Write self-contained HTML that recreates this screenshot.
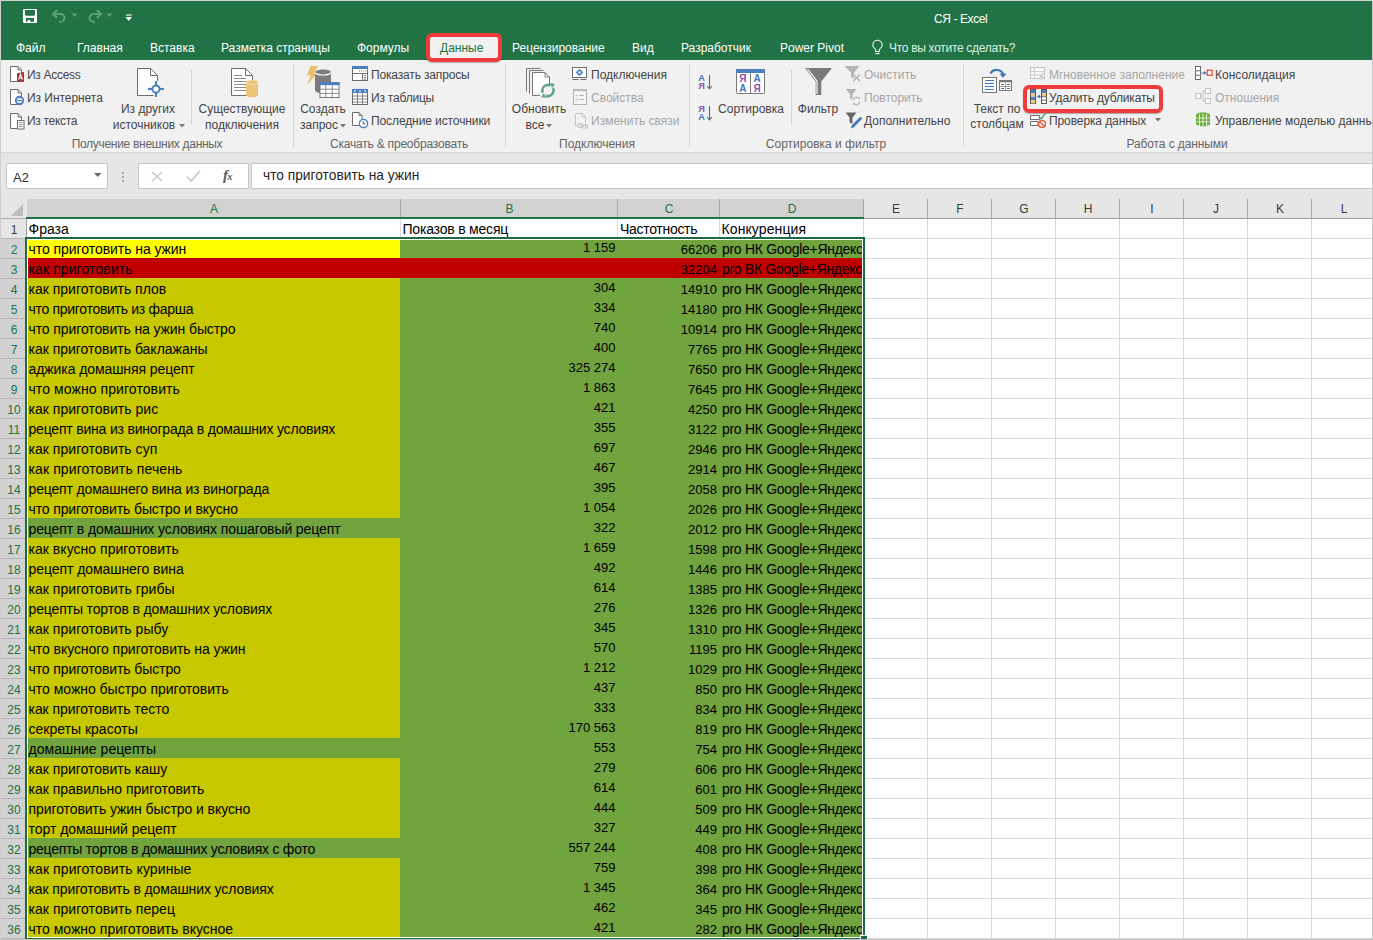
<!DOCTYPE html>
<html><head><meta charset="utf-8"><title>Excel</title>
<style>
html,body{margin:0;padding:0;}
body{width:1373px;height:940px;overflow:hidden;position:relative;font-family:"Liberation Sans", sans-serif;background:#fff;}
body>div,body>svg{position:absolute;}
div{position:absolute;}
.t{white-space:nowrap;font-family:"Liberation Sans", sans-serif;}
</style></head><body>
<div style="left:0px;top:0px;width:1373px;height:940px;background:#d3cfd0;"></div><div style="left:1px;top:1px;width:1371px;height:59px;background:#217346;"></div><svg style="position:absolute;left:23px;top:9px;" width="14" height="14" viewBox="0 0 14 14"><path d="M0 1.2Q0 0 1.2 0H12.8Q14 0 14 1.2V12.8Q14 14 12.8 14H1.2Q0 14 0 12.8Z" fill="#fff"/><path d="M2 1H12V5.6Q12 6.7 10.9 6.7H3.1Q2 6.7 2 5.6Z" fill="#217346"/><path d="M3 9H11V12.8H7.2V11H4.7V12.8H3Z" fill="#217346"/></svg><svg style="position:absolute;left:51px;top:8px;" width="17" height="16" viewBox="0 0 17 16"><path d="M3 6h6.5a3.9 3.9 0 0 1 0 7.8H8" fill="none" stroke="#5f9d7a" stroke-width="2"/><path d="M6.2 2L2 6l4.2 4" fill="none" stroke="#5f9d7a" stroke-width="2"/></svg><svg style="position:absolute;left:71px;top:13px;" width="8" height="5" viewBox="0 0 8 5"><path d="M0.5 0.5h6l-3 3.5z" fill="#5f9d7a"/></svg><svg style="position:absolute;left:86px;top:8px;" width="17" height="16" viewBox="0 0 17 16"><path d="M14 6h-6.5a3.9 3.9 0 0 0 0 7.8H9" fill="none" stroke="#5f9d7a" stroke-width="2"/><path d="M10.8 2L15 6l-4.2 4" fill="none" stroke="#5f9d7a" stroke-width="2"/></svg><svg style="position:absolute;left:106px;top:13px;" width="8" height="5" viewBox="0 0 8 5"><path d="M0.5 0.5h6l-3 3.5z" fill="#5f9d7a"/></svg><svg style="position:absolute;left:125px;top:14px;" width="8" height="8" viewBox="0 0 8 8"><rect x="1" y="0.5" width="5.5" height="1.1" fill="#fff"/><path d="M0.5 3h6.5l-3.25 4z" fill="#fff"/></svg><div class="t" style="top:12.84px;font-size:12px;line-height:12px;color:#ffffff;left:934px;letter-spacing:-0.4px;">СЯ - Excel</div><div class="t" style="top:41.84px;font-size:12px;line-height:12px;color:#ffffff;left:16px;">Файл</div><div class="t" style="top:41.84px;font-size:12px;line-height:12px;color:#ffffff;left:77px;">Главная</div><div class="t" style="top:41.84px;font-size:12px;line-height:12px;color:#ffffff;left:150px;">Вставка</div><div class="t" style="top:41.84px;font-size:12px;line-height:12px;color:#ffffff;left:221px;">Разметка страницы</div><div class="t" style="top:41.84px;font-size:12px;line-height:12px;color:#ffffff;left:357px;">Формулы</div><div class="t" style="top:41.84px;font-size:12px;line-height:12px;color:#ffffff;left:512px;">Рецензирование</div><div class="t" style="top:41.84px;font-size:12px;line-height:12px;color:#ffffff;left:632px;">Вид</div><div class="t" style="top:41.84px;font-size:12px;line-height:12px;color:#ffffff;left:681px;">Разработчик</div><div class="t" style="top:41.84px;font-size:12px;line-height:12px;color:#ffffff;left:780px;">Power Pivot</div><svg style="position:absolute;left:871px;top:39px;" width="13" height="16" viewBox="0 0 13 16"><path d="M6.5 1.2a4.6 4.6 0 0 0-2.6 8.4c.5.4.8 1 .8 1.6v1.3h3.6v-1.3c0-.6.3-1.2.8-1.6a4.6 4.6 0 0 0-2.6-8.4z" fill="none" stroke="#e8f3ea" stroke-width="1.1"/><path d="M4.5 14.6h4" stroke="#e8f3ea" stroke-width="1.2"/></svg><div class="t" style="top:41.84px;font-size:12px;line-height:12px;color:#dcefe1;left:889px;letter-spacing:-0.3px;">Что вы хотите сделать?</div><div style="left:1px;top:60px;width:1371px;height:92px;background:#f1f1f1;"></div><div style="left:1px;top:152px;width:1371px;height:1px;background:#d6d6d6;"></div><div style="left:1px;top:153px;width:1371px;height:46px;background:#e6e6e6;"></div><div style="left:426px;top:33px;width:76px;height:29px;background:#f1f1f1;border:4px solid #ef3b3b;border-radius:6px;box-sizing:border-box;box-shadow:0 1px 1px rgba(0,0,0,.25);"></div><div class="t" style="top:41.84px;font-size:12px;line-height:12px;color:#217346;left:440px;">Данные</div><div style="left:293px;top:64px;width:1px;height:83px;background:#d4d4d4;"></div><div style="left:505px;top:64px;width:1px;height:83px;background:#d4d4d4;"></div><div style="left:689px;top:64px;width:1px;height:83px;background:#d4d4d4;"></div><div style="left:963px;top:64px;width:1px;height:83px;background:#d4d4d4;"></div><div style="left:191px;top:70px;width:1px;height:54px;background:#d4d4d4;"></div><div style="left:791px;top:70px;width:1px;height:54px;background:#d4d4d4;"></div><div class="t" style="top:137.84px;font-size:12px;line-height:12px;color:#666666;left:-153px;width:600px;text-align:center;letter-spacing:-0.3px;">Получение внешних данных</div><div class="t" style="top:137.84px;font-size:12px;line-height:12px;color:#666666;left:99px;width:600px;text-align:center;letter-spacing:-0.2px;">Скачать &amp; преобразовать</div><div class="t" style="top:137.84px;font-size:12px;line-height:12px;color:#666666;left:297px;width:600px;text-align:center;">Подключения</div><div class="t" style="top:137.84px;font-size:12px;line-height:12px;color:#666666;left:526px;width:600px;text-align:center;">Сортировка и фильтр</div><div class="t" style="top:137.84px;font-size:12px;line-height:12px;color:#666666;left:877px;width:600px;text-align:center;letter-spacing:-0.1px;">Работа с данными</div><svg style="position:absolute;left:9px;top:65px;" width="17" height="18" viewBox="0 0 17 18"><path d="M1.5 1.5H9L12.5 5V16.5H1.5Z" fill="#fff" stroke="#6d6d6d"/><path d="M9 1.5V5H12.5" fill="none" stroke="#6d6d6d"/><path d="M8 8.2L15 7V17L8 16.2Z" fill="#a4373a"/><path d="M9.6 14.6L11.5 9.2L13.4 14.6M10.3 13H12.7" fill="none" stroke="#fff" stroke-width="1.1"/></svg><div class="t" style="top:68.84px;font-size:12px;line-height:12px;color:#444444;left:27px;letter-spacing:-0.3px;">Из Access</div><svg style="position:absolute;left:9px;top:88px;" width="17" height="18" viewBox="0 0 17 18"><path d="M1.5 1.5H9L12.5 5V16.5H1.5Z" fill="#fff" stroke="#6d6d6d"/><path d="M9 1.5V5H12.5" fill="none" stroke="#6d6d6d"/><circle cx="10.5" cy="12.5" r="3.7" fill="#fff" stroke="#4a80c0" stroke-width="1.9"/><path d="M8 12.5H13" stroke="#4a80c0" stroke-width="1.2"/><path d="M9.4 10.6L10.5 9.4L11.6 10.6ZM9.4 14.4L10.5 15.6L11.6 14.4Z" fill="#4a80c0"/></svg><div class="t" style="top:91.84px;font-size:12px;line-height:12px;color:#444444;left:27px;letter-spacing:-0.05px;">Из Интернета</div><svg style="position:absolute;left:9px;top:112px;" width="17" height="18" viewBox="0 0 17 18"><path d="M1.5 1.5H9L12.5 5V16.5H1.5Z" fill="#fff" stroke="#6d6d6d"/><path d="M9 1.5V5H12.5" fill="none" stroke="#6d6d6d"/><rect x="8.5" y="8.5" width="6.5" height="8.5" fill="#fff" stroke="#6d6d6d"/><path d="M10 10.7H13.5M10 12.7H13.5M10 14.7H13.5" stroke="#7a7a7a" stroke-width="0.9"/></svg><div class="t" style="top:114.84px;font-size:12px;line-height:12px;color:#444444;left:27px;letter-spacing:-0.3px;">Из текста</div><svg style="position:absolute;left:135px;top:67px;" width="32" height="32" viewBox="0 0 32 32"><path d="M2.5 1.5H15.5L22.5 8.5V28.5H2.5Z" fill="#fff" stroke="#6d6d6d"/><path d="M15.5 1.5V8.5H22.5" fill="none" stroke="#6d6d6d"/><path d="M13 22H29M21 14V30" stroke="#f1f1f1" stroke-width="5"/><circle cx="21" cy="22" r="3.6" fill="#fff" stroke="#4a80c0" stroke-width="2"/><path d="M13 22H17.4M24.6 22H29M21 14V18.4M21 25.6V30" stroke="#4a80c0" stroke-width="2"/></svg><div class="t" style="top:102.84px;font-size:12px;line-height:12px;color:#444444;left:-152px;width:600px;text-align:center;">Из других</div><div class="t" style="top:118.84px;font-size:12px;line-height:12px;color:#444444;left:-156px;width:600px;text-align:center;">источников</div><svg style="position:absolute;left:179px;top:124px;" width="6" height="4" viewBox="0 0 6 4"><path d="M0 0h6l-3 3.5z" fill="#777"/></svg><svg style="position:absolute;left:229px;top:67px;" width="32" height="32" viewBox="0 0 32 32"><path d="M2.5 1.5H16.5L23.5 8.5V28.5H2.5Z" fill="#fff" stroke="#6d6d6d"/><path d="M16.5 1.5V8.5H23.5" fill="none" stroke="#6d6d6d"/><path d="M5 8.5H13M5 11.5H17M5 14.5H17M5 17.5H17M5 20.5H17M5 23.5H17" stroke="#8a8a8a" stroke-width="1"/><path d="M17 15.5A6 2.3 0 0 1 29 15.5V28A6 2.3 0 0 1 17 28Z" fill="#ecc677"/><path d="M17 15.5A6 2.3 0 0 0 29 15.5" fill="none" stroke="#f7e2b6" stroke-width="0.9"/></svg><div class="t" style="top:102.84px;font-size:12px;line-height:12px;color:#444444;left:-58px;width:600px;text-align:center;">Существующие</div><div class="t" style="top:118.84px;font-size:12px;line-height:12px;color:#444444;left:-58px;width:600px;text-align:center;">подключения</div><svg style="position:absolute;left:305px;top:65px;" width="35" height="34" viewBox="0 0 35 34"><path d="M5.5 1H13L9.2 8H12.5L2 20L5.8 10.5H2Z" fill="#ebbf6b"/><path d="M10 7.2A8 2.8 0 0 1 26 7.2V25.5A8 2.8 0 0 1 10 25.5Z" fill="#7b7b7b"/><path d="M10 7.2A8 2.8 0 0 0 26 7.2" fill="none" stroke="#f1f1f1" stroke-width="1.2"/><path d="M9.5 7.5A8.5 3 0 0 1 26.5 7.5" fill="none" stroke="#f1f1f1" stroke-width="0.01"/><rect x="15" y="17.5" width="19" height="15" fill="#fff" stroke="#7b7b7b"/><rect x="14.5" y="17" width="20" height="3.2" fill="#4a80c0"/><path d="M15 24.2H34M15 28.4H34M20.8 20.2V32.5M27.2 20.2V32.5" stroke="#8a8a8a" stroke-width="1"/><path d="M14.5 32.5H34.5" stroke="#7b7b7b"/></svg><div class="t" style="top:102.84px;font-size:12px;line-height:12px;color:#444444;left:23px;width:600px;text-align:center;">Создать</div><div class="t" style="top:118.84px;font-size:12px;line-height:12px;color:#444444;left:19px;width:600px;text-align:center;">запрос</div><svg style="position:absolute;left:340px;top:124px;" width="6" height="4" viewBox="0 0 6 4"><path d="M0 0h6l-3 3.5z" fill="#777"/></svg><svg style="position:absolute;left:352px;top:66px;" width="17" height="15" viewBox="0 0 17 15"><rect x="0.5" y="0.5" width="15" height="14" fill="#fff" stroke="#6d6d6d"/><rect x="0" y="0" width="16" height="3" fill="#4a80c0"/><path d="M0.5 7.5H15.5M10.5 7.5V14.5" stroke="#6d6d6d"/><path d="M7 5H8M9 5H10M11 5H12M13 5H14M12 9.5H14M12 11.5H14M12 13.2H14" stroke="#777" stroke-width="0.9"/></svg><div class="t" style="top:68.84px;font-size:12px;line-height:12px;color:#444444;left:371px;letter-spacing:-0.15px;">Показать запросы</div><svg style="position:absolute;left:352px;top:89px;" width="17" height="16" viewBox="0 0 17 16"><rect x="0.5" y="0.5" width="15" height="15" fill="#fff" stroke="#6d6d6d"/><rect x="0" y="0" width="16" height="4" fill="#4a80c0"/><path d="M0.5 7H15.5M0.5 10H15.5M0.5 13H15.5M5.5 4V15.5M10.5 4V15.5" stroke="#7a7a7a" stroke-width="0.9"/><path d="M2 2H4M7 2H9M12 2H14" stroke="#fff" stroke-width="1"/></svg><div class="t" style="top:91.84px;font-size:12px;line-height:12px;color:#444444;left:371px;letter-spacing:-0.2px;">Из таблицы</div><svg style="position:absolute;left:352px;top:112px;" width="18" height="17" viewBox="0 0 18 17"><path d="M0.5 0.5H7L10 3.5V13.5H0.5Z" fill="#fff" stroke="#6d6d6d"/><path d="M7 0.5V3.5H10" fill="none" stroke="#6d6d6d"/><circle cx="11.5" cy="11.5" r="4.2" fill="#fff" stroke="#4a80c0" stroke-width="1.2"/><path d="M11.2 9V11.8H13.6" fill="none" stroke="#555" stroke-width="0.9"/></svg><div class="t" style="top:114.84px;font-size:12px;line-height:12px;color:#444444;left:371px;letter-spacing:-0.1px;">Последние источники</div><svg style="position:absolute;left:524px;top:66px;" width="34" height="34" viewBox="0 0 34 34"><path d="M2.5 25.5V2.5H16.5" fill="none" stroke="#777"/><path d="M5.5 27.5V4.5H19.5" fill="none" stroke="#777"/><path d="M8.5 29.5V6.5H21L25.5 11V20" fill="#fff" stroke="#777"/><path d="M8.5 29.5H16" stroke="#777"/><path d="M21 6.5V11H25.5" fill="none" stroke="#777"/><circle cx="24" cy="24.5" r="5.6" fill="none" stroke="#62a48a" stroke-width="2.6" stroke-dasharray="13 4.6" transform="rotate(-25 24 24.5)"/><path d="M26 17L31 18L28 22Z" fill="#62a48a"/><path d="M22 32L17 31L20 27Z" fill="#62a48a"/></svg><div class="t" style="top:102.84px;font-size:12px;line-height:12px;color:#444444;left:239px;width:600px;text-align:center;">Обновить</div><div class="t" style="top:118.84px;font-size:12px;line-height:12px;color:#444444;left:235px;width:600px;text-align:center;">все</div><svg style="position:absolute;left:546px;top:124px;" width="6" height="4" viewBox="0 0 6 4"><path d="M0 0h6l-3 3.5z" fill="#777"/></svg><svg style="position:absolute;left:571px;top:66px;" width="17" height="16" viewBox="0 0 17 16"><rect x="1.5" y="1.5" width="14" height="10" fill="#fff" stroke="#6d6d6d"/><path d="M1.5 13.5H7.5M9.5 13.5H15.5" stroke="#6d6d6d"/><circle cx="8.5" cy="6.5" r="2" fill="#fff" stroke="#3f7fc4" stroke-width="1.4"/><path d="M8.5 3.2V4.2M8.5 8.8V9.8M5.2 6.5H6.2M10.8 6.5H11.8" stroke="#3f7fc4" stroke-width="1.3"/></svg><div class="t" style="top:68.84px;font-size:12px;line-height:12px;color:#444444;left:591px;">Подключения</div><svg style="position:absolute;left:572px;top:89px;" width="16" height="16" viewBox="0 0 16 16"><rect x="1.5" y="0.5" width="13" height="15" fill="#f6f6f8" stroke="#b0b0b0"/><rect x="1" y="0" width="14" height="2.2" fill="#b8b8b8"/><path d="M7 6.5H12M7 10.5H12" stroke="#b4b4b4"/><circle cx="4.5" cy="6.5" r="1.1" fill="#c4c4c4"/><circle cx="4.5" cy="10.5" r="1" fill="none" stroke="#c4c4c4" stroke-width="0.8"/></svg><div class="t" style="top:91.84px;font-size:12px;line-height:12px;color:#a6a6a6;left:591px;">Свойства</div><svg style="position:absolute;left:574px;top:112px;" width="15" height="17" viewBox="0 0 15 17"><path d="M1.5 1.5H8L11.5 5V14" fill="#f7f5f8" stroke="#c4c4c4"/><path d="M1.5 1.5V14" stroke="#c4c4c4"/><path d="M8 1.5V5H11.5" fill="none" stroke="#c4c4c4"/><rect x="3.5" y="12" width="5" height="3" rx="1.5" fill="none" stroke="#b8b8b8" stroke-width="1.1"/><rect x="8" y="13" width="5.5" height="3" rx="1.5" fill="none" stroke="#b8b8b8" stroke-width="1.1"/></svg><div class="t" style="top:114.84px;font-size:12px;line-height:12px;color:#a6a6a6;left:591px;">Изменить связи</div><svg style="position:absolute;left:698px;top:74px;" width="16" height="16" viewBox="0 0 16 16"><text x="0.2" y="6.8" font-size="9.2" font-family="Liberation Sans" font-weight="bold" fill="#3f78b8">A</text><text x="0.2" y="14.8" font-size="9.2" font-family="Liberation Sans" font-weight="bold" fill="#8e52b0">Я</text><path d="M11.5 1V14.5M9 12L11.5 14.8L14 12" fill="none" stroke="#666" stroke-width="1.1"/></svg><svg style="position:absolute;left:698px;top:105px;" width="16" height="16" viewBox="0 0 16 16"><text x="0.2" y="6.8" font-size="9.2" font-family="Liberation Sans" font-weight="bold" fill="#8e52b0">Я</text><text x="0.2" y="14.8" font-size="9.2" font-family="Liberation Sans" font-weight="bold" fill="#3f78b8">A</text><path d="M11.5 1V14.5M9 12L11.5 14.8L14 12" fill="none" stroke="#666" stroke-width="1.1"/></svg><svg style="position:absolute;left:735px;top:68px;" width="31" height="27" viewBox="0 0 31 27"><rect x="1.5" y="2.5" width="28" height="23" rx="0.8" fill="#fff" stroke="#777"/><rect x="1" y="1" width="29" height="4" fill="#4a80c0"/><path d="M15.5 5V25.5" stroke="#777"/><text x="4.3" y="13.8" font-size="10" font-family="Liberation Sans" font-weight="bold" fill="#8e52b0">Я</text><text x="4.3" y="23.8" font-size="10" font-family="Liberation Sans" font-weight="bold" fill="#3f78b8">A</text><text x="18.5" y="13.8" font-size="10" font-family="Liberation Sans" font-weight="bold" fill="#3f78b8">A</text><text x="18.5" y="23.8" font-size="10" font-family="Liberation Sans" font-weight="bold" fill="#8e52b0">Я</text></svg><div class="t" style="top:102.84px;font-size:12px;line-height:12px;color:#444444;left:451px;width:600px;text-align:center;">Сортировка</div><svg style="position:absolute;left:804px;top:67px;" width="30" height="29" viewBox="0 0 30 29"><path d="M1 1H28L17.3 14.5V28H11.7V14.5Z" fill="#7a7a7a"/><path d="M3.5 2.2L13 14V27" fill="none" stroke="#fff" stroke-width="1.1"/></svg><div class="t" style="top:102.84px;font-size:12px;line-height:12px;color:#444444;left:518px;width:600px;text-align:center;">Фильтр</div><svg style="position:absolute;left:844px;top:65px;" width="18" height="18" viewBox="0 0 18 18"><path d="M0.5 1H15.5L10 7.5V14L7 11.5V7.5Z" fill="#b3b3b3"/><path d="M9.5 9.5L16 16M16 9.5L9.5 16" stroke="#f1f1f1" stroke-width="3"/><path d="M9.5 9.5L16 16M16 9.5L9.5 16" stroke="#b0b0b0" stroke-width="1.3"/></svg><div class="t" style="top:68.84px;font-size:12px;line-height:12px;color:#a6a6a6;left:864px;">Очистить</div><svg style="position:absolute;left:844px;top:88px;" width="18" height="18" viewBox="0 0 18 18"><path d="M1.5 1H12.5L8.5 6V12.5L6 10.5V6Z" fill="#b3b3b3"/><circle cx="12.5" cy="13" r="5" fill="#f1f1f1"/><path d="M9.2 12.2A3.4 3.4 0 0 1 15.2 10.6M15.8 13.8A3.4 3.4 0 0 1 9.8 15.4" fill="none" stroke="#b3b3b3" stroke-width="1.2"/><path d="M14 9L16.2 9.6L15.6 11.8ZM11 17L8.8 16.4L9.4 14.2Z" fill="#b3b3b3"/></svg><div class="t" style="top:91.84px;font-size:12px;line-height:12px;color:#a6a6a6;left:864px;">Повторить</div><svg style="position:absolute;left:844px;top:111px;" width="19" height="19" viewBox="0 0 19 19"><path d="M1.5 1.5H12.5L8.5 6.5V13.5L5.5 11V6.5Z" fill="#676767"/><path d="M16.5 7.5L8.5 15.5" stroke="#f1f1f1" stroke-width="5"/><path d="M16.5 7.5L9 15" stroke="#3f78b8" stroke-width="2.8" stroke-linecap="round"/><path d="M8.2 14.2L6.8 17.5L10 16.2Z" fill="#3f78b8"/></svg><div class="t" style="top:114.84px;font-size:12px;line-height:12px;color:#444444;left:864px;">Дополнительно</div><svg style="position:absolute;left:980px;top:66px;" width="34" height="29" viewBox="0 0 34 29"><path d="M10.5 7.5A7 6.5 0 0 1 23.2 8" fill="none" stroke="#3f78b8" stroke-width="2.2"/><path d="M19.5 7.5H26.5L23 12Z" fill="#3f78b8"/><rect x="2.5" y="11.5" width="14" height="15" fill="#fff" stroke="#777"/><path d="M5 14.5H14M5 17.5H14M5 20.5H14M5 23.5H14" stroke="#3f78b8" stroke-width="1"/><rect x="19.5" y="14.5" width="12" height="10" fill="#fff" stroke="#777"/><rect x="19" y="14" width="13" height="2.3" fill="#777"/><path d="M25.5 16V24.5M19.5 20.5H31.5" stroke="#8a8a8a" stroke-width="0.8"/><path d="M21 18.5H24M27 18.5H30M21 22.5H24M27 22.5H30" stroke="#3f78b8" stroke-width="1"/></svg><div class="t" style="top:102.84px;font-size:12px;line-height:12px;color:#444444;left:697px;width:600px;text-align:center;">Текст по</div><div class="t" style="top:117.84px;font-size:12px;line-height:12px;color:#444444;left:697px;width:600px;text-align:center;">столбцам</div><svg style="position:absolute;left:1029px;top:66px;" width="18" height="16" viewBox="0 0 18 16"><rect x="1.5" y="1.5" width="14" height="11" fill="#faf8fb" stroke="#c4c4c4"/><path d="M1.5 5.5H15.5M1.5 9H15.5M5.5 1.5V12.5" stroke="#c8c8c8" stroke-width="0.9"/><path d="M13.5 6.5L9.5 11.5H12L10 16L15.5 10H13L15 6.5Z" fill="#c4c4c4" stroke="#f1f1f1" stroke-width="0.6"/></svg><div class="t" style="top:68.84px;font-size:12px;line-height:12px;color:#a6a6a6;left:1049px;">Мгновенное заполнение</div><div style="left:1023px;top:85px;width:140px;height:28px;background:transparent;border:4px solid #ef3b3b;border-radius:6px;box-sizing:border-box;box-shadow:0 1px 1px rgba(0,0,0,.3);"></div><svg style="position:absolute;left:1029px;top:89px;" width="18" height="16" viewBox="0 0 18 16"><rect x="1.5" y="0.5" width="5" height="14" fill="#fff" stroke="#5a5a5a"/><rect x="2" y="1" width="4" height="3.2" fill="#4a80c0"/><rect x="2" y="4.4" width="4" height="3.2" fill="#f2c57a"/><rect x="2" y="7.8" width="4" height="3.2" fill="#4a80c0"/><rect x="2" y="11.2" width="4" height="3.3" fill="#f2c57a"/><rect x="12.5" y="0.5" width="5" height="14" fill="#fff" stroke="#5a5a5a"/><rect x="13" y="1" width="4" height="3.2" fill="#4a80c0"/><rect x="13" y="4.4" width="4" height="3.2" fill="#f2c57a"/><path d="M13 7.8H17M13 11.2H17" stroke="#5a5a5a" stroke-width="0.9"/><path d="M7.8 7.5H11M9.6 5.9L11.2 7.5L9.6 9.1" fill="none" stroke="#3f78b8" stroke-width="1.2"/></svg><div class="t" style="top:91.84px;font-size:12px;line-height:12px;color:#444444;left:1049px;letter-spacing:-0.15px;">Удалить дубликаты</div><svg style="position:absolute;left:1029px;top:110px;" width="19" height="18" viewBox="0 0 19 18"><path d="M1.5 5.5H10.5V9.5H1.5ZM1.5 11.5H9V15.5H1.5Z" fill="#fff" stroke="#6d6d6d"/><path d="M10 6.5L12.3 9L17 2.5" fill="none" stroke="#4ea184" stroke-width="1.3"/><circle cx="13" cy="14" r="3.4" fill="#fff" stroke="#dc5630" stroke-width="1.4"/><path d="M10.8 11.8L15.2 16.2" stroke="#dc5630" stroke-width="1.3"/></svg><div class="t" style="top:114.84px;font-size:12px;line-height:12px;color:#444444;left:1049px;letter-spacing:-0.1px;">Проверка данных</div><svg style="position:absolute;left:1155px;top:118px;" width="7" height="4" viewBox="0 0 7 4"><path d="M0 0h6l-3 3.5z" fill="#777"/></svg><svg style="position:absolute;left:1195px;top:66px;" width="18" height="15" viewBox="0 0 18 15"><rect x="0.5" y="0.5" width="5" height="13" fill="#fff" stroke="#6d6d6d"/><path d="M0.5 4.8H5.5M0.5 9.2H5.5" stroke="#6d6d6d"/><path d="M6.5 7H10.5M9 5.6L10.6 7L9 8.4" fill="none" stroke="#3f78b8" stroke-width="1.1"/><rect x="12.2" y="4.2" width="5" height="5" fill="#fff" stroke="#dc5630" stroke-width="1.3"/></svg><div class="t" style="top:68.84px;font-size:12px;line-height:12px;color:#444444;left:1215px;">Консолидация</div><svg style="position:absolute;left:1195px;top:88px;" width="17" height="17" viewBox="0 0 17 17"><rect x="0.5" y="5.5" width="5" height="5" fill="#fff" stroke="#c0c0c0"/><rect x="10.5" y="0.5" width="5" height="5" fill="#fff" stroke="#c0c0c0"/><rect x="10.5" y="10.5" width="5" height="5" fill="#fff" stroke="#c0c0c0"/><path d="M5.5 8H8M8 3V13M8 3H10.5M8 13H10.5" fill="none" stroke="#c0c0c0"/><path d="M2.5 8H3.5M12.5 3H13.5M12.5 13H13.5" stroke="#c8c8c8"/></svg><div class="t" style="top:91.84px;font-size:12px;line-height:12px;color:#a6a6a6;left:1215px;">Отношения</div><svg style="position:absolute;left:1195px;top:111px;" width="17" height="17" viewBox="0 0 17 17"><path d="M1 3.2Q8 -0.5 15 3.2V13.5Q8 17.5 1 13.5Z" fill="#6bb03c"/><path d="M4.5 3V15M8 2.5V15.5M11.5 3V15M1.5 7H14.5M1.5 10.8H14.5" stroke="#fff" stroke-width="0.9" opacity="0.85"/></svg><div class="t" style="top:114.84px;font-size:12px;line-height:12px;color:#444444;left:1215px;">Управление моделью данных</div><div style="left:6px;top:163px;width:102px;height:26px;background:#ffffff;border:1px solid #c6c6c6;box-sizing:border-box;"></div><div class="t" style="top:170.50px;font-size:13px;line-height:13px;color:#333333;left:13px;">A2</div><svg style="position:absolute;left:94px;top:173px;" width="8" height="5" viewBox="0 0 8 5"><path d="M0 0h7.5l-3.75 4z" fill="#6b6b6b"/></svg><div style="left:122px;top:172px;width:2px;height:2px;background:#a8a8a8;"></div><div style="left:122px;top:176px;width:2px;height:2px;background:#a8a8a8;"></div><div style="left:122px;top:180px;width:2px;height:2px;background:#a8a8a8;"></div><div style="left:138px;top:163px;width:111px;height:26px;background:#ffffff;border:1px solid #c6c6c6;box-sizing:border-box;"></div><svg style="position:absolute;left:151px;top:171px;" width="12" height="11" viewBox="0 0 12 11"><path d="M1 1l10 9M11 1L1 10" stroke="#c4c4c4" stroke-width="1.3"/></svg><svg style="position:absolute;left:186px;top:170px;" width="15" height="12" viewBox="0 0 15 12"><path d="M1 6.5l4 4.5 9-10" fill="none" stroke="#c8c8c8" stroke-width="1.8"/></svg><div class="t" style="left:223px;top:168px;font-family:'Liberation Serif',serif;font-style:italic;font-weight:bold;font-size:15px;line-height:15px;color:#595959;letter-spacing:-0.8px;">f<span style="font-size:10.5px;">x</span></div><div style="left:251px;top:163px;width:1122px;height:26px;background:#ffffff;border:1px solid #c6c6c6;border-right:none;box-sizing:border-box;"></div><div class="t" style="top:169.36px;font-size:13.75px;line-height:13.75px;color:#262626;left:263px;">что приготовить на ужин</div><div style="left:1px;top:199px;width:25px;height:20px;background:#e6e6e6;"></div><svg style="position:absolute;left:10px;top:204px;" width="14" height="12" viewBox="0 0 14 12"><path d="M13 0v12H1z" fill="#bdbdbd"/></svg><div style="left:1px;top:218px;width:25px;height:1px;background:#ababab;"></div><div style="left:27px;top:199px;width:374px;height:19px;background:#d2d2d2;"></div><div style="left:401px;top:199px;width:217px;height:19px;background:#d2d2d2;"></div><div style="left:618px;top:199px;width:102px;height:19px;background:#d2d2d2;"></div><div style="left:720px;top:199px;width:144px;height:19px;background:#d2d2d2;"></div><div style="left:864px;top:199px;width:64px;height:19px;background:#e6e6e6;"></div><div style="left:928px;top:199px;width:64px;height:19px;background:#e6e6e6;"></div><div style="left:992px;top:199px;width:64px;height:19px;background:#e6e6e6;"></div><div style="left:1056px;top:199px;width:64px;height:19px;background:#e6e6e6;"></div><div style="left:1120px;top:199px;width:64px;height:19px;background:#e6e6e6;"></div><div style="left:1184px;top:199px;width:64px;height:19px;background:#e6e6e6;"></div><div style="left:1248px;top:199px;width:64px;height:19px;background:#e6e6e6;"></div><div style="left:1312px;top:199px;width:64px;height:19px;background:#e6e6e6;"></div><div style="left:26px;top:199px;width:1px;height:19px;background:#f0f0f0;"></div><div style="left:400px;top:199px;width:1px;height:19px;background:#ababab;"></div><div style="left:617px;top:199px;width:1px;height:19px;background:#ababab;"></div><div style="left:719px;top:199px;width:1px;height:19px;background:#ababab;"></div><div style="left:863px;top:199px;width:1px;height:19px;background:#ababab;"></div><div style="left:927px;top:199px;width:1px;height:19px;background:#ababab;"></div><div style="left:991px;top:199px;width:1px;height:19px;background:#ababab;"></div><div style="left:1055px;top:199px;width:1px;height:19px;background:#ababab;"></div><div style="left:1119px;top:199px;width:1px;height:19px;background:#ababab;"></div><div style="left:1183px;top:199px;width:1px;height:19px;background:#ababab;"></div><div style="left:1247px;top:199px;width:1px;height:19px;background:#ababab;"></div><div style="left:1311px;top:199px;width:1px;height:19px;background:#ababab;"></div><div style="left:1375px;top:199px;width:1px;height:19px;background:#ababab;"></div><div class="t" style="top:202.84px;font-size:12px;line-height:12px;color:#217346;left:-86.0px;width:600px;text-align:center;">A</div><div class="t" style="top:202.84px;font-size:12px;line-height:12px;color:#217346;left:209.5px;width:600px;text-align:center;">B</div><div class="t" style="top:202.84px;font-size:12px;line-height:12px;color:#217346;left:369.0px;width:600px;text-align:center;">C</div><div class="t" style="top:202.84px;font-size:12px;line-height:12px;color:#217346;left:492.0px;width:600px;text-align:center;">D</div><div class="t" style="top:202.84px;font-size:12px;line-height:12px;color:#3a3a3a;left:596.0px;width:600px;text-align:center;">E</div><div class="t" style="top:202.84px;font-size:12px;line-height:12px;color:#3a3a3a;left:660.0px;width:600px;text-align:center;">F</div><div class="t" style="top:202.84px;font-size:12px;line-height:12px;color:#3a3a3a;left:724.0px;width:600px;text-align:center;">G</div><div class="t" style="top:202.84px;font-size:12px;line-height:12px;color:#3a3a3a;left:788.0px;width:600px;text-align:center;">H</div><div class="t" style="top:202.84px;font-size:12px;line-height:12px;color:#3a3a3a;left:852.0px;width:600px;text-align:center;">I</div><div class="t" style="top:202.84px;font-size:12px;line-height:12px;color:#3a3a3a;left:916.0px;width:600px;text-align:center;">J</div><div class="t" style="top:202.84px;font-size:12px;line-height:12px;color:#3a3a3a;left:980.0px;width:600px;text-align:center;">K</div><div class="t" style="top:202.84px;font-size:12px;line-height:12px;color:#3a3a3a;left:1044.0px;width:600px;text-align:center;">L</div><div style="left:26px;top:218px;width:1347px;height:1px;background:#a0a0a0;"></div><div style="left:26px;top:217px;width:838px;height:2px;background:#217346;"></div><div style="left:1px;top:219px;width:25px;height:19px;background:#e6e6e6;"></div><div style="left:1px;top:238px;width:25px;height:1px;background:#b4b4b4;"></div><div class="t" style="top:223.84px;font-size:12px;line-height:12px;color:#3a3a3a;left:-286px;width:600px;text-align:center;">1</div><div style="left:1px;top:239px;width:25px;height:19px;background:#d2d2d2;"></div><div style="left:1px;top:258px;width:25px;height:1px;background:#b4b4b4;"></div><div class="t" style="top:243.84px;font-size:12px;line-height:12px;color:#217346;left:-286px;width:600px;text-align:center;">2</div><div style="left:1px;top:259px;width:25px;height:19px;background:#d2d2d2;"></div><div style="left:1px;top:278px;width:25px;height:1px;background:#b4b4b4;"></div><div class="t" style="top:263.84px;font-size:12px;line-height:12px;color:#217346;left:-286px;width:600px;text-align:center;">3</div><div style="left:1px;top:279px;width:25px;height:19px;background:#d2d2d2;"></div><div style="left:1px;top:298px;width:25px;height:1px;background:#b4b4b4;"></div><div class="t" style="top:283.84px;font-size:12px;line-height:12px;color:#217346;left:-286px;width:600px;text-align:center;">4</div><div style="left:1px;top:299px;width:25px;height:19px;background:#d2d2d2;"></div><div style="left:1px;top:318px;width:25px;height:1px;background:#b4b4b4;"></div><div class="t" style="top:303.84px;font-size:12px;line-height:12px;color:#217346;left:-286px;width:600px;text-align:center;">5</div><div style="left:1px;top:319px;width:25px;height:19px;background:#d2d2d2;"></div><div style="left:1px;top:338px;width:25px;height:1px;background:#b4b4b4;"></div><div class="t" style="top:323.84px;font-size:12px;line-height:12px;color:#217346;left:-286px;width:600px;text-align:center;">6</div><div style="left:1px;top:339px;width:25px;height:19px;background:#d2d2d2;"></div><div style="left:1px;top:358px;width:25px;height:1px;background:#b4b4b4;"></div><div class="t" style="top:343.84px;font-size:12px;line-height:12px;color:#217346;left:-286px;width:600px;text-align:center;">7</div><div style="left:1px;top:359px;width:25px;height:19px;background:#d2d2d2;"></div><div style="left:1px;top:378px;width:25px;height:1px;background:#b4b4b4;"></div><div class="t" style="top:363.84px;font-size:12px;line-height:12px;color:#217346;left:-286px;width:600px;text-align:center;">8</div><div style="left:1px;top:379px;width:25px;height:19px;background:#d2d2d2;"></div><div style="left:1px;top:398px;width:25px;height:1px;background:#b4b4b4;"></div><div class="t" style="top:383.84px;font-size:12px;line-height:12px;color:#217346;left:-286px;width:600px;text-align:center;">9</div><div style="left:1px;top:399px;width:25px;height:19px;background:#d2d2d2;"></div><div style="left:1px;top:418px;width:25px;height:1px;background:#b4b4b4;"></div><div class="t" style="top:403.84px;font-size:12px;line-height:12px;color:#217346;left:-286px;width:600px;text-align:center;">10</div><div style="left:1px;top:419px;width:25px;height:19px;background:#d2d2d2;"></div><div style="left:1px;top:438px;width:25px;height:1px;background:#b4b4b4;"></div><div class="t" style="top:423.84px;font-size:12px;line-height:12px;color:#217346;left:-286px;width:600px;text-align:center;">11</div><div style="left:1px;top:439px;width:25px;height:19px;background:#d2d2d2;"></div><div style="left:1px;top:458px;width:25px;height:1px;background:#b4b4b4;"></div><div class="t" style="top:443.84px;font-size:12px;line-height:12px;color:#217346;left:-286px;width:600px;text-align:center;">12</div><div style="left:1px;top:459px;width:25px;height:19px;background:#d2d2d2;"></div><div style="left:1px;top:478px;width:25px;height:1px;background:#b4b4b4;"></div><div class="t" style="top:463.84px;font-size:12px;line-height:12px;color:#217346;left:-286px;width:600px;text-align:center;">13</div><div style="left:1px;top:479px;width:25px;height:19px;background:#d2d2d2;"></div><div style="left:1px;top:498px;width:25px;height:1px;background:#b4b4b4;"></div><div class="t" style="top:483.84px;font-size:12px;line-height:12px;color:#217346;left:-286px;width:600px;text-align:center;">14</div><div style="left:1px;top:499px;width:25px;height:19px;background:#d2d2d2;"></div><div style="left:1px;top:518px;width:25px;height:1px;background:#b4b4b4;"></div><div class="t" style="top:503.84px;font-size:12px;line-height:12px;color:#217346;left:-286px;width:600px;text-align:center;">15</div><div style="left:1px;top:519px;width:25px;height:19px;background:#d2d2d2;"></div><div style="left:1px;top:538px;width:25px;height:1px;background:#b4b4b4;"></div><div class="t" style="top:523.84px;font-size:12px;line-height:12px;color:#217346;left:-286px;width:600px;text-align:center;">16</div><div style="left:1px;top:539px;width:25px;height:19px;background:#d2d2d2;"></div><div style="left:1px;top:558px;width:25px;height:1px;background:#b4b4b4;"></div><div class="t" style="top:543.84px;font-size:12px;line-height:12px;color:#217346;left:-286px;width:600px;text-align:center;">17</div><div style="left:1px;top:559px;width:25px;height:19px;background:#d2d2d2;"></div><div style="left:1px;top:578px;width:25px;height:1px;background:#b4b4b4;"></div><div class="t" style="top:563.84px;font-size:12px;line-height:12px;color:#217346;left:-286px;width:600px;text-align:center;">18</div><div style="left:1px;top:579px;width:25px;height:19px;background:#d2d2d2;"></div><div style="left:1px;top:598px;width:25px;height:1px;background:#b4b4b4;"></div><div class="t" style="top:583.84px;font-size:12px;line-height:12px;color:#217346;left:-286px;width:600px;text-align:center;">19</div><div style="left:1px;top:599px;width:25px;height:19px;background:#d2d2d2;"></div><div style="left:1px;top:618px;width:25px;height:1px;background:#b4b4b4;"></div><div class="t" style="top:603.84px;font-size:12px;line-height:12px;color:#217346;left:-286px;width:600px;text-align:center;">20</div><div style="left:1px;top:619px;width:25px;height:19px;background:#d2d2d2;"></div><div style="left:1px;top:638px;width:25px;height:1px;background:#b4b4b4;"></div><div class="t" style="top:623.84px;font-size:12px;line-height:12px;color:#217346;left:-286px;width:600px;text-align:center;">21</div><div style="left:1px;top:639px;width:25px;height:19px;background:#d2d2d2;"></div><div style="left:1px;top:658px;width:25px;height:1px;background:#b4b4b4;"></div><div class="t" style="top:643.84px;font-size:12px;line-height:12px;color:#217346;left:-286px;width:600px;text-align:center;">22</div><div style="left:1px;top:659px;width:25px;height:19px;background:#d2d2d2;"></div><div style="left:1px;top:678px;width:25px;height:1px;background:#b4b4b4;"></div><div class="t" style="top:663.84px;font-size:12px;line-height:12px;color:#217346;left:-286px;width:600px;text-align:center;">23</div><div style="left:1px;top:679px;width:25px;height:19px;background:#d2d2d2;"></div><div style="left:1px;top:698px;width:25px;height:1px;background:#b4b4b4;"></div><div class="t" style="top:683.84px;font-size:12px;line-height:12px;color:#217346;left:-286px;width:600px;text-align:center;">24</div><div style="left:1px;top:699px;width:25px;height:19px;background:#d2d2d2;"></div><div style="left:1px;top:718px;width:25px;height:1px;background:#b4b4b4;"></div><div class="t" style="top:703.84px;font-size:12px;line-height:12px;color:#217346;left:-286px;width:600px;text-align:center;">25</div><div style="left:1px;top:719px;width:25px;height:19px;background:#d2d2d2;"></div><div style="left:1px;top:738px;width:25px;height:1px;background:#b4b4b4;"></div><div class="t" style="top:723.84px;font-size:12px;line-height:12px;color:#217346;left:-286px;width:600px;text-align:center;">26</div><div style="left:1px;top:739px;width:25px;height:19px;background:#d2d2d2;"></div><div style="left:1px;top:758px;width:25px;height:1px;background:#b4b4b4;"></div><div class="t" style="top:743.84px;font-size:12px;line-height:12px;color:#217346;left:-286px;width:600px;text-align:center;">27</div><div style="left:1px;top:759px;width:25px;height:19px;background:#d2d2d2;"></div><div style="left:1px;top:778px;width:25px;height:1px;background:#b4b4b4;"></div><div class="t" style="top:763.84px;font-size:12px;line-height:12px;color:#217346;left:-286px;width:600px;text-align:center;">28</div><div style="left:1px;top:779px;width:25px;height:19px;background:#d2d2d2;"></div><div style="left:1px;top:798px;width:25px;height:1px;background:#b4b4b4;"></div><div class="t" style="top:783.84px;font-size:12px;line-height:12px;color:#217346;left:-286px;width:600px;text-align:center;">29</div><div style="left:1px;top:799px;width:25px;height:19px;background:#d2d2d2;"></div><div style="left:1px;top:818px;width:25px;height:1px;background:#b4b4b4;"></div><div class="t" style="top:803.84px;font-size:12px;line-height:12px;color:#217346;left:-286px;width:600px;text-align:center;">30</div><div style="left:1px;top:819px;width:25px;height:19px;background:#d2d2d2;"></div><div style="left:1px;top:838px;width:25px;height:1px;background:#b4b4b4;"></div><div class="t" style="top:823.84px;font-size:12px;line-height:12px;color:#217346;left:-286px;width:600px;text-align:center;">31</div><div style="left:1px;top:839px;width:25px;height:19px;background:#d2d2d2;"></div><div style="left:1px;top:858px;width:25px;height:1px;background:#b4b4b4;"></div><div class="t" style="top:843.84px;font-size:12px;line-height:12px;color:#217346;left:-286px;width:600px;text-align:center;">32</div><div style="left:1px;top:859px;width:25px;height:19px;background:#d2d2d2;"></div><div style="left:1px;top:878px;width:25px;height:1px;background:#b4b4b4;"></div><div class="t" style="top:863.84px;font-size:12px;line-height:12px;color:#217346;left:-286px;width:600px;text-align:center;">33</div><div style="left:1px;top:879px;width:25px;height:19px;background:#d2d2d2;"></div><div style="left:1px;top:898px;width:25px;height:1px;background:#b4b4b4;"></div><div class="t" style="top:883.84px;font-size:12px;line-height:12px;color:#217346;left:-286px;width:600px;text-align:center;">34</div><div style="left:1px;top:899px;width:25px;height:19px;background:#d2d2d2;"></div><div style="left:1px;top:918px;width:25px;height:1px;background:#b4b4b4;"></div><div class="t" style="top:903.84px;font-size:12px;line-height:12px;color:#217346;left:-286px;width:600px;text-align:center;">35</div><div style="left:1px;top:919px;width:25px;height:19px;background:#d2d2d2;"></div><div style="left:1px;top:938px;width:25px;height:1px;background:#b4b4b4;"></div><div class="t" style="top:923.84px;font-size:12px;line-height:12px;color:#217346;left:-286px;width:600px;text-align:center;">36</div><div style="left:26px;top:219px;width:1px;height:19px;background:#a0a0a0;"></div><div style="left:27px;top:219px;width:1346px;height:721px;background:#ffffff;"></div><div style="left:400px;top:219px;width:1px;height:721px;background:#d9d9d9;"></div><div style="left:617px;top:219px;width:1px;height:721px;background:#d9d9d9;"></div><div style="left:719px;top:219px;width:1px;height:721px;background:#d9d9d9;"></div><div style="left:863px;top:219px;width:1px;height:721px;background:#d9d9d9;"></div><div style="left:927px;top:219px;width:1px;height:721px;background:#d9d9d9;"></div><div style="left:991px;top:219px;width:1px;height:721px;background:#d9d9d9;"></div><div style="left:1055px;top:219px;width:1px;height:721px;background:#d9d9d9;"></div><div style="left:1119px;top:219px;width:1px;height:721px;background:#d9d9d9;"></div><div style="left:1183px;top:219px;width:1px;height:721px;background:#d9d9d9;"></div><div style="left:1247px;top:219px;width:1px;height:721px;background:#d9d9d9;"></div><div style="left:1311px;top:219px;width:1px;height:721px;background:#d9d9d9;"></div><div style="left:1375px;top:219px;width:1px;height:721px;background:#d9d9d9;"></div><div style="left:27px;top:238px;width:1346px;height:1px;background:#d9d9d9;"></div><div style="left:27px;top:258px;width:1346px;height:1px;background:#d9d9d9;"></div><div style="left:27px;top:278px;width:1346px;height:1px;background:#d9d9d9;"></div><div style="left:27px;top:298px;width:1346px;height:1px;background:#d9d9d9;"></div><div style="left:27px;top:318px;width:1346px;height:1px;background:#d9d9d9;"></div><div style="left:27px;top:338px;width:1346px;height:1px;background:#d9d9d9;"></div><div style="left:27px;top:358px;width:1346px;height:1px;background:#d9d9d9;"></div><div style="left:27px;top:378px;width:1346px;height:1px;background:#d9d9d9;"></div><div style="left:27px;top:398px;width:1346px;height:1px;background:#d9d9d9;"></div><div style="left:27px;top:418px;width:1346px;height:1px;background:#d9d9d9;"></div><div style="left:27px;top:438px;width:1346px;height:1px;background:#d9d9d9;"></div><div style="left:27px;top:458px;width:1346px;height:1px;background:#d9d9d9;"></div><div style="left:27px;top:478px;width:1346px;height:1px;background:#d9d9d9;"></div><div style="left:27px;top:498px;width:1346px;height:1px;background:#d9d9d9;"></div><div style="left:27px;top:518px;width:1346px;height:1px;background:#d9d9d9;"></div><div style="left:27px;top:538px;width:1346px;height:1px;background:#d9d9d9;"></div><div style="left:27px;top:558px;width:1346px;height:1px;background:#d9d9d9;"></div><div style="left:27px;top:578px;width:1346px;height:1px;background:#d9d9d9;"></div><div style="left:27px;top:598px;width:1346px;height:1px;background:#d9d9d9;"></div><div style="left:27px;top:618px;width:1346px;height:1px;background:#d9d9d9;"></div><div style="left:27px;top:638px;width:1346px;height:1px;background:#d9d9d9;"></div><div style="left:27px;top:658px;width:1346px;height:1px;background:#d9d9d9;"></div><div style="left:27px;top:678px;width:1346px;height:1px;background:#d9d9d9;"></div><div style="left:27px;top:698px;width:1346px;height:1px;background:#d9d9d9;"></div><div style="left:27px;top:718px;width:1346px;height:1px;background:#d9d9d9;"></div><div style="left:27px;top:738px;width:1346px;height:1px;background:#d9d9d9;"></div><div style="left:27px;top:758px;width:1346px;height:1px;background:#d9d9d9;"></div><div style="left:27px;top:778px;width:1346px;height:1px;background:#d9d9d9;"></div><div style="left:27px;top:798px;width:1346px;height:1px;background:#d9d9d9;"></div><div style="left:27px;top:818px;width:1346px;height:1px;background:#d9d9d9;"></div><div style="left:27px;top:838px;width:1346px;height:1px;background:#d9d9d9;"></div><div style="left:27px;top:858px;width:1346px;height:1px;background:#d9d9d9;"></div><div style="left:27px;top:878px;width:1346px;height:1px;background:#d9d9d9;"></div><div style="left:27px;top:898px;width:1346px;height:1px;background:#d9d9d9;"></div><div style="left:27px;top:918px;width:1346px;height:1px;background:#d9d9d9;"></div><div style="left:27px;top:938px;width:1346px;height:1px;background:#d9d9d9;"></div><div class="t" style="top:222.15px;font-size:14px;line-height:14px;color:#000000;left:28.5px;">Фраза</div><div class="t" style="top:222.15px;font-size:14px;line-height:14px;color:#000000;left:402.5px;letter-spacing:-0.2px;">Показов в месяц</div><div class="t" style="top:222.15px;font-size:14px;line-height:14px;color:#000000;left:620px;letter-spacing:-0.3px;">Частотность</div><div class="t" style="top:222.15px;font-size:14px;line-height:14px;color:#000000;left:721.5px;letter-spacing:0.1px;">Конкуренция</div><div style="left:26px;top:238px;width:374px;height:20px;background:#ffff00;"></div><div style="left:400px;top:238px;width:463px;height:20px;background:#71a33f;"></div><div class="t" style="top:242.15px;font-size:14px;line-height:14px;color:#000000;left:28.5px;letter-spacing:-0.055px;">что приготовить на ужин</div><div class="t" style="top:241.00px;font-size:13px;line-height:13px;color:#000000;left:215.5px;width:400px;text-align:right;">1 159</div><div class="t" style="top:243.00px;font-size:13px;line-height:13px;color:#000000;left:317px;width:400px;text-align:right;">66206</div><div style="left:719px;top:238px;width:144px;height:20px;overflow:hidden;"><div class="t" style="left:3px;top:4.15px;font-size:14px;line-height:14px;color:#000000;letter-spacing:-0.3px;">pro НК Google+Яндекс</div></div><div style="left:26px;top:258px;width:837px;height:20px;background:#c00000;"></div><div class="t" style="top:262.15px;font-size:14px;line-height:14px;color:#000000;left:28.5px;letter-spacing:0.100px;">как приготовить</div><div class="t" style="top:263.00px;font-size:13px;line-height:13px;color:#000000;left:317px;width:400px;text-align:right;">32204</div><div style="left:719px;top:258px;width:144px;height:20px;overflow:hidden;"><div class="t" style="left:3px;top:4.15px;font-size:14px;line-height:14px;color:#000000;letter-spacing:-0.3px;">pro ВК Google+Яндекс</div></div><div style="left:26px;top:278px;width:374px;height:20px;background:#c8c800;"></div><div style="left:400px;top:278px;width:463px;height:20px;background:#71a33f;"></div><div class="t" style="top:282.15px;font-size:14px;line-height:14px;color:#000000;left:28.5px;letter-spacing:0.000px;">как приготовить плов</div><div class="t" style="top:281.00px;font-size:13px;line-height:13px;color:#000000;left:215.5px;width:400px;text-align:right;">304</div><div class="t" style="top:283.00px;font-size:13px;line-height:13px;color:#000000;left:317px;width:400px;text-align:right;">14910</div><div style="left:719px;top:278px;width:144px;height:20px;overflow:hidden;"><div class="t" style="left:3px;top:4.15px;font-size:14px;line-height:14px;color:#000000;letter-spacing:-0.3px;">pro НК Google+Яндекс</div></div><div style="left:26px;top:298px;width:374px;height:20px;background:#c8c800;"></div><div style="left:400px;top:298px;width:463px;height:20px;background:#71a33f;"></div><div class="t" style="top:302.15px;font-size:14px;line-height:14px;color:#000000;left:28.5px;letter-spacing:-0.300px;">что приготовить из фарша</div><div class="t" style="top:301.00px;font-size:13px;line-height:13px;color:#000000;left:215.5px;width:400px;text-align:right;">334</div><div class="t" style="top:303.00px;font-size:13px;line-height:13px;color:#000000;left:317px;width:400px;text-align:right;">14180</div><div style="left:719px;top:298px;width:144px;height:20px;overflow:hidden;"><div class="t" style="left:3px;top:4.15px;font-size:14px;line-height:14px;color:#000000;letter-spacing:-0.3px;">pro НК Google+Яндекс</div></div><div style="left:26px;top:318px;width:374px;height:20px;background:#c8c800;"></div><div style="left:400px;top:318px;width:463px;height:20px;background:#71a33f;"></div><div class="t" style="top:322.15px;font-size:14px;line-height:14px;color:#000000;left:28.5px;letter-spacing:-0.103px;">что приготовить на ужин быстро</div><div class="t" style="top:321.00px;font-size:13px;line-height:13px;color:#000000;left:215.5px;width:400px;text-align:right;">740</div><div class="t" style="top:323.00px;font-size:13px;line-height:13px;color:#000000;left:317px;width:400px;text-align:right;">10914</div><div style="left:719px;top:318px;width:144px;height:20px;overflow:hidden;"><div class="t" style="left:3px;top:4.15px;font-size:14px;line-height:14px;color:#000000;letter-spacing:-0.3px;">pro НК Google+Яндекс</div></div><div style="left:26px;top:338px;width:374px;height:20px;background:#c8c800;"></div><div style="left:400px;top:338px;width:463px;height:20px;background:#71a33f;"></div><div class="t" style="top:342.15px;font-size:14px;line-height:14px;color:#000000;left:28.5px;letter-spacing:-0.012px;">как приготовить баклажаны</div><div class="t" style="top:341.00px;font-size:13px;line-height:13px;color:#000000;left:215.5px;width:400px;text-align:right;">400</div><div class="t" style="top:343.00px;font-size:13px;line-height:13px;color:#000000;left:317px;width:400px;text-align:right;">7765</div><div style="left:719px;top:338px;width:144px;height:20px;overflow:hidden;"><div class="t" style="left:3px;top:4.15px;font-size:14px;line-height:14px;color:#000000;letter-spacing:-0.3px;">pro НК Google+Яндекс</div></div><div style="left:26px;top:358px;width:374px;height:20px;background:#c8c800;"></div><div style="left:400px;top:358px;width:463px;height:20px;background:#71a33f;"></div><div class="t" style="top:362.15px;font-size:14px;line-height:14px;color:#000000;left:28.5px;letter-spacing:-0.081px;">аджика домашняя рецепт</div><div class="t" style="top:361.00px;font-size:13px;line-height:13px;color:#000000;left:215.5px;width:400px;text-align:right;">325 274</div><div class="t" style="top:363.00px;font-size:13px;line-height:13px;color:#000000;left:317px;width:400px;text-align:right;">7650</div><div style="left:719px;top:358px;width:144px;height:20px;overflow:hidden;"><div class="t" style="left:3px;top:4.15px;font-size:14px;line-height:14px;color:#000000;letter-spacing:-0.3px;">pro НК Google+Яндекс</div></div><div style="left:26px;top:378px;width:374px;height:20px;background:#c8c800;"></div><div style="left:400px;top:378px;width:463px;height:20px;background:#71a33f;"></div><div class="t" style="top:382.15px;font-size:14px;line-height:14px;color:#000000;left:28.5px;letter-spacing:0.080px;">что можно приготовить</div><div class="t" style="top:381.00px;font-size:13px;line-height:13px;color:#000000;left:215.5px;width:400px;text-align:right;">1 863</div><div class="t" style="top:383.00px;font-size:13px;line-height:13px;color:#000000;left:317px;width:400px;text-align:right;">7645</div><div style="left:719px;top:378px;width:144px;height:20px;overflow:hidden;"><div class="t" style="left:3px;top:4.15px;font-size:14px;line-height:14px;color:#000000;letter-spacing:-0.3px;">pro НК Google+Яндекс</div></div><div style="left:26px;top:398px;width:374px;height:20px;background:#c8c800;"></div><div style="left:400px;top:398px;width:463px;height:20px;background:#71a33f;"></div><div class="t" style="top:402.15px;font-size:14px;line-height:14px;color:#000000;left:28.5px;letter-spacing:0.028px;">как приготовить рис</div><div class="t" style="top:401.00px;font-size:13px;line-height:13px;color:#000000;left:215.5px;width:400px;text-align:right;">421</div><div class="t" style="top:403.00px;font-size:13px;line-height:13px;color:#000000;left:317px;width:400px;text-align:right;">4250</div><div style="left:719px;top:398px;width:144px;height:20px;overflow:hidden;"><div class="t" style="left:3px;top:4.15px;font-size:14px;line-height:14px;color:#000000;letter-spacing:-0.3px;">pro НК Google+Яндекс</div></div><div style="left:26px;top:418px;width:374px;height:20px;background:#c8c800;"></div><div style="left:400px;top:418px;width:463px;height:20px;background:#71a33f;"></div><div class="t" style="top:422.15px;font-size:14px;line-height:14px;color:#000000;left:28.5px;letter-spacing:-0.198px;">рецепт вина из винограда в домашних условиях</div><div class="t" style="top:421.00px;font-size:13px;line-height:13px;color:#000000;left:215.5px;width:400px;text-align:right;">355</div><div class="t" style="top:423.00px;font-size:13px;line-height:13px;color:#000000;left:317px;width:400px;text-align:right;">3122</div><div style="left:719px;top:418px;width:144px;height:20px;overflow:hidden;"><div class="t" style="left:3px;top:4.15px;font-size:14px;line-height:14px;color:#000000;letter-spacing:-0.3px;">pro НК Google+Яндекс</div></div><div style="left:26px;top:438px;width:374px;height:20px;background:#c8c800;"></div><div style="left:400px;top:438px;width:463px;height:20px;background:#71a33f;"></div><div class="t" style="top:442.15px;font-size:14px;line-height:14px;color:#000000;left:28.5px;letter-spacing:0.033px;">как приготовить суп</div><div class="t" style="top:441.00px;font-size:13px;line-height:13px;color:#000000;left:215.5px;width:400px;text-align:right;">697</div><div class="t" style="top:443.00px;font-size:13px;line-height:13px;color:#000000;left:317px;width:400px;text-align:right;">2946</div><div style="left:719px;top:438px;width:144px;height:20px;overflow:hidden;"><div class="t" style="left:3px;top:4.15px;font-size:14px;line-height:14px;color:#000000;letter-spacing:-0.3px;">pro НК Google+Яндекс</div></div><div style="left:26px;top:458px;width:374px;height:20px;background:#c8c800;"></div><div style="left:400px;top:458px;width:463px;height:20px;background:#71a33f;"></div><div class="t" style="top:462.15px;font-size:14px;line-height:14px;color:#000000;left:28.5px;letter-spacing:0.105px;">как приготовить печень</div><div class="t" style="top:461.00px;font-size:13px;line-height:13px;color:#000000;left:215.5px;width:400px;text-align:right;">467</div><div class="t" style="top:463.00px;font-size:13px;line-height:13px;color:#000000;left:317px;width:400px;text-align:right;">2914</div><div style="left:719px;top:458px;width:144px;height:20px;overflow:hidden;"><div class="t" style="left:3px;top:4.15px;font-size:14px;line-height:14px;color:#000000;letter-spacing:-0.3px;">pro НК Google+Яндекс</div></div><div style="left:26px;top:478px;width:374px;height:20px;background:#c8c800;"></div><div style="left:400px;top:478px;width:463px;height:20px;background:#71a33f;"></div><div class="t" style="top:482.15px;font-size:14px;line-height:14px;color:#000000;left:28.5px;letter-spacing:-0.158px;">рецепт домашнего вина из винограда</div><div class="t" style="top:481.00px;font-size:13px;line-height:13px;color:#000000;left:215.5px;width:400px;text-align:right;">395</div><div class="t" style="top:483.00px;font-size:13px;line-height:13px;color:#000000;left:317px;width:400px;text-align:right;">2058</div><div style="left:719px;top:478px;width:144px;height:20px;overflow:hidden;"><div class="t" style="left:3px;top:4.15px;font-size:14px;line-height:14px;color:#000000;letter-spacing:-0.3px;">pro НК Google+Яндекс</div></div><div style="left:26px;top:498px;width:374px;height:20px;background:#c8c800;"></div><div style="left:400px;top:498px;width:463px;height:20px;background:#71a33f;"></div><div class="t" style="top:502.15px;font-size:14px;line-height:14px;color:#000000;left:28.5px;letter-spacing:-0.130px;">что приготовить быстро и вкусно</div><div class="t" style="top:501.00px;font-size:13px;line-height:13px;color:#000000;left:215.5px;width:400px;text-align:right;">1 054</div><div class="t" style="top:503.00px;font-size:13px;line-height:13px;color:#000000;left:317px;width:400px;text-align:right;">2026</div><div style="left:719px;top:498px;width:144px;height:20px;overflow:hidden;"><div class="t" style="left:3px;top:4.15px;font-size:14px;line-height:14px;color:#000000;letter-spacing:-0.3px;">pro НК Google+Яндекс</div></div><div style="left:26px;top:518px;width:374px;height:20px;background:#71a33f;"></div><div style="left:400px;top:518px;width:463px;height:20px;background:#71a33f;"></div><div class="t" style="top:522.15px;font-size:14px;line-height:14px;color:#000000;left:28.5px;letter-spacing:-0.107px;">рецепт в домашних условиях пошаговый рецепт</div><div class="t" style="top:521.00px;font-size:13px;line-height:13px;color:#000000;left:215.5px;width:400px;text-align:right;">322</div><div class="t" style="top:523.00px;font-size:13px;line-height:13px;color:#000000;left:317px;width:400px;text-align:right;">2012</div><div style="left:719px;top:518px;width:144px;height:20px;overflow:hidden;"><div class="t" style="left:3px;top:4.15px;font-size:14px;line-height:14px;color:#000000;letter-spacing:-0.3px;">pro НК Google+Яндекс</div></div><div style="left:26px;top:538px;width:374px;height:20px;background:#c8c800;"></div><div style="left:400px;top:538px;width:463px;height:20px;background:#71a33f;"></div><div class="t" style="top:542.15px;font-size:14px;line-height:14px;color:#000000;left:28.5px;letter-spacing:0.029px;">как вкусно приготовить</div><div class="t" style="top:541.00px;font-size:13px;line-height:13px;color:#000000;left:215.5px;width:400px;text-align:right;">1 659</div><div class="t" style="top:543.00px;font-size:13px;line-height:13px;color:#000000;left:317px;width:400px;text-align:right;">1598</div><div style="left:719px;top:538px;width:144px;height:20px;overflow:hidden;"><div class="t" style="left:3px;top:4.15px;font-size:14px;line-height:14px;color:#000000;letter-spacing:-0.3px;">pro НК Google+Яндекс</div></div><div style="left:26px;top:558px;width:374px;height:20px;background:#c8c800;"></div><div style="left:400px;top:558px;width:463px;height:20px;background:#71a33f;"></div><div class="t" style="top:562.15px;font-size:14px;line-height:14px;color:#000000;left:28.5px;letter-spacing:-0.065px;">рецепт домашнего вина</div><div class="t" style="top:561.00px;font-size:13px;line-height:13px;color:#000000;left:215.5px;width:400px;text-align:right;">492</div><div class="t" style="top:563.00px;font-size:13px;line-height:13px;color:#000000;left:317px;width:400px;text-align:right;">1446</div><div style="left:719px;top:558px;width:144px;height:20px;overflow:hidden;"><div class="t" style="left:3px;top:4.15px;font-size:14px;line-height:14px;color:#000000;letter-spacing:-0.3px;">pro НК Google+Яндекс</div></div><div style="left:26px;top:578px;width:374px;height:20px;background:#c8c800;"></div><div style="left:400px;top:578px;width:463px;height:20px;background:#71a33f;"></div><div class="t" style="top:582.15px;font-size:14px;line-height:14px;color:#000000;left:28.5px;letter-spacing:0.035px;">как приготовить грибы</div><div class="t" style="top:581.00px;font-size:13px;line-height:13px;color:#000000;left:215.5px;width:400px;text-align:right;">614</div><div class="t" style="top:583.00px;font-size:13px;line-height:13px;color:#000000;left:317px;width:400px;text-align:right;">1385</div><div style="left:719px;top:578px;width:144px;height:20px;overflow:hidden;"><div class="t" style="left:3px;top:4.15px;font-size:14px;line-height:14px;color:#000000;letter-spacing:-0.3px;">pro НК Google+Яндекс</div></div><div style="left:26px;top:598px;width:374px;height:20px;background:#c8c800;"></div><div style="left:400px;top:598px;width:463px;height:20px;background:#71a33f;"></div><div class="t" style="top:602.15px;font-size:14px;line-height:14px;color:#000000;left:28.5px;letter-spacing:-0.139px;">рецепты тортов в домашних условиях</div><div class="t" style="top:601.00px;font-size:13px;line-height:13px;color:#000000;left:215.5px;width:400px;text-align:right;">276</div><div class="t" style="top:603.00px;font-size:13px;line-height:13px;color:#000000;left:317px;width:400px;text-align:right;">1326</div><div style="left:719px;top:598px;width:144px;height:20px;overflow:hidden;"><div class="t" style="left:3px;top:4.15px;font-size:14px;line-height:14px;color:#000000;letter-spacing:-0.3px;">pro НК Google+Яндекс</div></div><div style="left:26px;top:618px;width:374px;height:20px;background:#c8c800;"></div><div style="left:400px;top:618px;width:463px;height:20px;background:#71a33f;"></div><div class="t" style="top:622.15px;font-size:14px;line-height:14px;color:#000000;left:28.5px;letter-spacing:0.032px;">как приготовить рыбу</div><div class="t" style="top:621.00px;font-size:13px;line-height:13px;color:#000000;left:215.5px;width:400px;text-align:right;">345</div><div class="t" style="top:623.00px;font-size:13px;line-height:13px;color:#000000;left:317px;width:400px;text-align:right;">1310</div><div style="left:719px;top:618px;width:144px;height:20px;overflow:hidden;"><div class="t" style="left:3px;top:4.15px;font-size:14px;line-height:14px;color:#000000;letter-spacing:-0.3px;">pro НК Google+Яндекс</div></div><div style="left:26px;top:638px;width:374px;height:20px;background:#c8c800;"></div><div style="left:400px;top:638px;width:463px;height:20px;background:#71a33f;"></div><div class="t" style="top:642.15px;font-size:14px;line-height:14px;color:#000000;left:28.5px;letter-spacing:-0.052px;">что вкусного приготовить на ужин</div><div class="t" style="top:641.00px;font-size:13px;line-height:13px;color:#000000;left:215.5px;width:400px;text-align:right;">570</div><div class="t" style="top:643.00px;font-size:13px;line-height:13px;color:#000000;left:317px;width:400px;text-align:right;">1195</div><div style="left:719px;top:638px;width:144px;height:20px;overflow:hidden;"><div class="t" style="left:3px;top:4.15px;font-size:14px;line-height:14px;color:#000000;letter-spacing:-0.3px;">pro НК Google+Яндекс</div></div><div style="left:26px;top:658px;width:374px;height:20px;background:#c8c800;"></div><div style="left:400px;top:658px;width:463px;height:20px;background:#71a33f;"></div><div class="t" style="top:662.15px;font-size:14px;line-height:14px;color:#000000;left:28.5px;letter-spacing:-0.110px;">что приготовить быстро</div><div class="t" style="top:661.00px;font-size:13px;line-height:13px;color:#000000;left:215.5px;width:400px;text-align:right;">1 212</div><div class="t" style="top:663.00px;font-size:13px;line-height:13px;color:#000000;left:317px;width:400px;text-align:right;">1029</div><div style="left:719px;top:658px;width:144px;height:20px;overflow:hidden;"><div class="t" style="left:3px;top:4.15px;font-size:14px;line-height:14px;color:#000000;letter-spacing:-0.3px;">pro НК Google+Яндекс</div></div><div style="left:26px;top:678px;width:374px;height:20px;background:#c8c800;"></div><div style="left:400px;top:678px;width:463px;height:20px;background:#71a33f;"></div><div class="t" style="top:682.15px;font-size:14px;line-height:14px;color:#000000;left:28.5px;letter-spacing:-0.015px;">что можно быстро приготовить</div><div class="t" style="top:681.00px;font-size:13px;line-height:13px;color:#000000;left:215.5px;width:400px;text-align:right;">437</div><div class="t" style="top:683.00px;font-size:13px;line-height:13px;color:#000000;left:317px;width:400px;text-align:right;">850</div><div style="left:719px;top:678px;width:144px;height:20px;overflow:hidden;"><div class="t" style="left:3px;top:4.15px;font-size:14px;line-height:14px;color:#000000;letter-spacing:-0.3px;">pro НК Google+Яндекс</div></div><div style="left:26px;top:698px;width:374px;height:20px;background:#c8c800;"></div><div style="left:400px;top:698px;width:463px;height:20px;background:#71a33f;"></div><div class="t" style="top:702.15px;font-size:14px;line-height:14px;color:#000000;left:28.5px;letter-spacing:-0.050px;">как приготовить тесто</div><div class="t" style="top:701.00px;font-size:13px;line-height:13px;color:#000000;left:215.5px;width:400px;text-align:right;">333</div><div class="t" style="top:703.00px;font-size:13px;line-height:13px;color:#000000;left:317px;width:400px;text-align:right;">834</div><div style="left:719px;top:698px;width:144px;height:20px;overflow:hidden;"><div class="t" style="left:3px;top:4.15px;font-size:14px;line-height:14px;color:#000000;letter-spacing:-0.3px;">pro НК Google+Яндекс</div></div><div style="left:26px;top:718px;width:374px;height:20px;background:#c8c800;"></div><div style="left:400px;top:718px;width:463px;height:20px;background:#71a33f;"></div><div class="t" style="top:722.15px;font-size:14px;line-height:14px;color:#000000;left:28.5px;letter-spacing:0.007px;">секреты красоты</div><div class="t" style="top:721.00px;font-size:13px;line-height:13px;color:#000000;left:215.5px;width:400px;text-align:right;">170 563</div><div class="t" style="top:723.00px;font-size:13px;line-height:13px;color:#000000;left:317px;width:400px;text-align:right;">819</div><div style="left:719px;top:718px;width:144px;height:20px;overflow:hidden;"><div class="t" style="left:3px;top:4.15px;font-size:14px;line-height:14px;color:#000000;letter-spacing:-0.3px;">pro НК Google+Яндекс</div></div><div style="left:26px;top:738px;width:374px;height:20px;background:#71a33f;"></div><div style="left:400px;top:738px;width:463px;height:20px;background:#71a33f;"></div><div class="t" style="top:742.15px;font-size:14px;line-height:14px;color:#000000;left:28.5px;letter-spacing:0.027px;">домашние рецепты</div><div class="t" style="top:741.00px;font-size:13px;line-height:13px;color:#000000;left:215.5px;width:400px;text-align:right;">553</div><div class="t" style="top:743.00px;font-size:13px;line-height:13px;color:#000000;left:317px;width:400px;text-align:right;">754</div><div style="left:719px;top:738px;width:144px;height:20px;overflow:hidden;"><div class="t" style="left:3px;top:4.15px;font-size:14px;line-height:14px;color:#000000;letter-spacing:-0.3px;">pro НК Google+Яндекс</div></div><div style="left:26px;top:758px;width:374px;height:20px;background:#c8c800;"></div><div style="left:400px;top:758px;width:463px;height:20px;background:#71a33f;"></div><div class="t" style="top:762.15px;font-size:14px;line-height:14px;color:#000000;left:28.5px;letter-spacing:-0.016px;">как приготовить кашу</div><div class="t" style="top:761.00px;font-size:13px;line-height:13px;color:#000000;left:215.5px;width:400px;text-align:right;">279</div><div class="t" style="top:763.00px;font-size:13px;line-height:13px;color:#000000;left:317px;width:400px;text-align:right;">606</div><div style="left:719px;top:758px;width:144px;height:20px;overflow:hidden;"><div class="t" style="left:3px;top:4.15px;font-size:14px;line-height:14px;color:#000000;letter-spacing:-0.3px;">pro НК Google+Яндекс</div></div><div style="left:26px;top:778px;width:374px;height:20px;background:#c8c800;"></div><div style="left:400px;top:778px;width:463px;height:20px;background:#71a33f;"></div><div class="t" style="top:782.15px;font-size:14px;line-height:14px;color:#000000;left:28.5px;letter-spacing:-0.004px;">как правильно приготовить</div><div class="t" style="top:781.00px;font-size:13px;line-height:13px;color:#000000;left:215.5px;width:400px;text-align:right;">614</div><div class="t" style="top:783.00px;font-size:13px;line-height:13px;color:#000000;left:317px;width:400px;text-align:right;">601</div><div style="left:719px;top:778px;width:144px;height:20px;overflow:hidden;"><div class="t" style="left:3px;top:4.15px;font-size:14px;line-height:14px;color:#000000;letter-spacing:-0.3px;">pro НК Google+Яндекс</div></div><div style="left:26px;top:798px;width:374px;height:20px;background:#c8c800;"></div><div style="left:400px;top:798px;width:463px;height:20px;background:#71a33f;"></div><div class="t" style="top:802.15px;font-size:14px;line-height:14px;color:#000000;left:28.5px;letter-spacing:-0.074px;">приготовить ужин быстро и вкусно</div><div class="t" style="top:801.00px;font-size:13px;line-height:13px;color:#000000;left:215.5px;width:400px;text-align:right;">444</div><div class="t" style="top:803.00px;font-size:13px;line-height:13px;color:#000000;left:317px;width:400px;text-align:right;">509</div><div style="left:719px;top:798px;width:144px;height:20px;overflow:hidden;"><div class="t" style="left:3px;top:4.15px;font-size:14px;line-height:14px;color:#000000;letter-spacing:-0.3px;">pro НК Google+Яндекс</div></div><div style="left:26px;top:818px;width:374px;height:20px;background:#c8c800;"></div><div style="left:400px;top:818px;width:463px;height:20px;background:#71a33f;"></div><div class="t" style="top:822.15px;font-size:14px;line-height:14px;color:#000000;left:28.5px;letter-spacing:-0.037px;">торт домашний рецепт</div><div class="t" style="top:821.00px;font-size:13px;line-height:13px;color:#000000;left:215.5px;width:400px;text-align:right;">327</div><div class="t" style="top:823.00px;font-size:13px;line-height:13px;color:#000000;left:317px;width:400px;text-align:right;">449</div><div style="left:719px;top:818px;width:144px;height:20px;overflow:hidden;"><div class="t" style="left:3px;top:4.15px;font-size:14px;line-height:14px;color:#000000;letter-spacing:-0.3px;">pro НК Google+Яндекс</div></div><div style="left:26px;top:838px;width:374px;height:20px;background:#71a33f;"></div><div style="left:400px;top:838px;width:463px;height:20px;background:#71a33f;"></div><div class="t" style="top:842.15px;font-size:14px;line-height:14px;color:#000000;left:28.5px;letter-spacing:-0.233px;">рецепты тортов в домашних условиях с фото</div><div class="t" style="top:841.00px;font-size:13px;line-height:13px;color:#000000;left:215.5px;width:400px;text-align:right;">557 244</div><div class="t" style="top:843.00px;font-size:13px;line-height:13px;color:#000000;left:317px;width:400px;text-align:right;">408</div><div style="left:719px;top:838px;width:144px;height:20px;overflow:hidden;"><div class="t" style="left:3px;top:4.15px;font-size:14px;line-height:14px;color:#000000;letter-spacing:-0.3px;">pro НК Google+Яндекс</div></div><div style="left:26px;top:858px;width:374px;height:20px;background:#c8c800;"></div><div style="left:400px;top:858px;width:463px;height:20px;background:#71a33f;"></div><div class="t" style="top:862.15px;font-size:14px;line-height:14px;color:#000000;left:28.5px;letter-spacing:0.091px;">как приготовить куриные</div><div class="t" style="top:861.00px;font-size:13px;line-height:13px;color:#000000;left:215.5px;width:400px;text-align:right;">759</div><div class="t" style="top:863.00px;font-size:13px;line-height:13px;color:#000000;left:317px;width:400px;text-align:right;">398</div><div style="left:719px;top:858px;width:144px;height:20px;overflow:hidden;"><div class="t" style="left:3px;top:4.15px;font-size:14px;line-height:14px;color:#000000;letter-spacing:-0.3px;">pro НК Google+Яндекс</div></div><div style="left:26px;top:878px;width:374px;height:20px;background:#c8c800;"></div><div style="left:400px;top:878px;width:463px;height:20px;background:#71a33f;"></div><div class="t" style="top:882.15px;font-size:14px;line-height:14px;color:#000000;left:28.5px;letter-spacing:-0.106px;">как приготовить в домашних условиях</div><div class="t" style="top:881.00px;font-size:13px;line-height:13px;color:#000000;left:215.5px;width:400px;text-align:right;">1 345</div><div class="t" style="top:883.00px;font-size:13px;line-height:13px;color:#000000;left:317px;width:400px;text-align:right;">364</div><div style="left:719px;top:878px;width:144px;height:20px;overflow:hidden;"><div class="t" style="left:3px;top:4.15px;font-size:14px;line-height:14px;color:#000000;letter-spacing:-0.3px;">pro НК Google+Яндекс</div></div><div style="left:26px;top:898px;width:374px;height:20px;background:#c8c800;"></div><div style="left:400px;top:898px;width:463px;height:20px;background:#71a33f;"></div><div class="t" style="top:902.15px;font-size:14px;line-height:14px;color:#000000;left:28.5px;letter-spacing:0.045px;">как приготовить перец</div><div class="t" style="top:901.00px;font-size:13px;line-height:13px;color:#000000;left:215.5px;width:400px;text-align:right;">462</div><div class="t" style="top:903.00px;font-size:13px;line-height:13px;color:#000000;left:317px;width:400px;text-align:right;">345</div><div style="left:719px;top:898px;width:144px;height:20px;overflow:hidden;"><div class="t" style="left:3px;top:4.15px;font-size:14px;line-height:14px;color:#000000;letter-spacing:-0.3px;">pro НК Google+Яндекс</div></div><div style="left:26px;top:918px;width:374px;height:20px;background:#c8c800;"></div><div style="left:400px;top:918px;width:463px;height:20px;background:#71a33f;"></div><div class="t" style="top:922.15px;font-size:14px;line-height:14px;color:#000000;left:28.5px;letter-spacing:0.004px;">что можно приготовить вкусное</div><div class="t" style="top:921.00px;font-size:13px;line-height:13px;color:#000000;left:215.5px;width:400px;text-align:right;">421</div><div class="t" style="top:923.00px;font-size:13px;line-height:13px;color:#000000;left:317px;width:400px;text-align:right;">282</div><div style="left:719px;top:918px;width:144px;height:20px;overflow:hidden;"><div class="t" style="left:3px;top:4.15px;font-size:14px;line-height:14px;color:#000000;letter-spacing:-0.3px;">pro НК Google+Яндекс</div></div><div style="left:25px;top:237px;width:840px;height:2px;background:#1e6b41;"></div><div style="left:25px;top:237px;width:2px;height:703px;background:#1e6b41;"></div><div style="left:863px;top:237px;width:2px;height:703px;background:#1e6b41;"></div><div style="left:27px;top:239px;width:836px;height:1px;background:#ffffff;"></div><div style="left:27px;top:239px;width:1px;height:699px;background:#ffffff;"></div><div style="left:862px;top:239px;width:1px;height:699px;background:#ffffff;"></div><div style="left:27px;top:937px;width:836px;height:1px;background:#ffffff;"></div><div style="left:25px;top:938px;width:840px;height:1px;background:#1e6b41;"></div><div style="left:860px;top:935px;width:8px;height:5px;background:#ffffff;"></div><div style="left:861px;top:936px;width:6px;height:4px;background:#1e6b41;"></div><div style="left:1372px;top:0px;width:1px;height:940px;background:#c8c8c8;"></div><div style="left:0px;top:939px;width:1373px;height:1px;background:#c4c4c4;"></div><div style="left:0px;top:0px;width:1373px;height:1px;background:#d3cfd0;"></div><div style="left:0px;top:0px;width:1px;height:940px;background:#d3cfd0;"></div>
</body></html>
